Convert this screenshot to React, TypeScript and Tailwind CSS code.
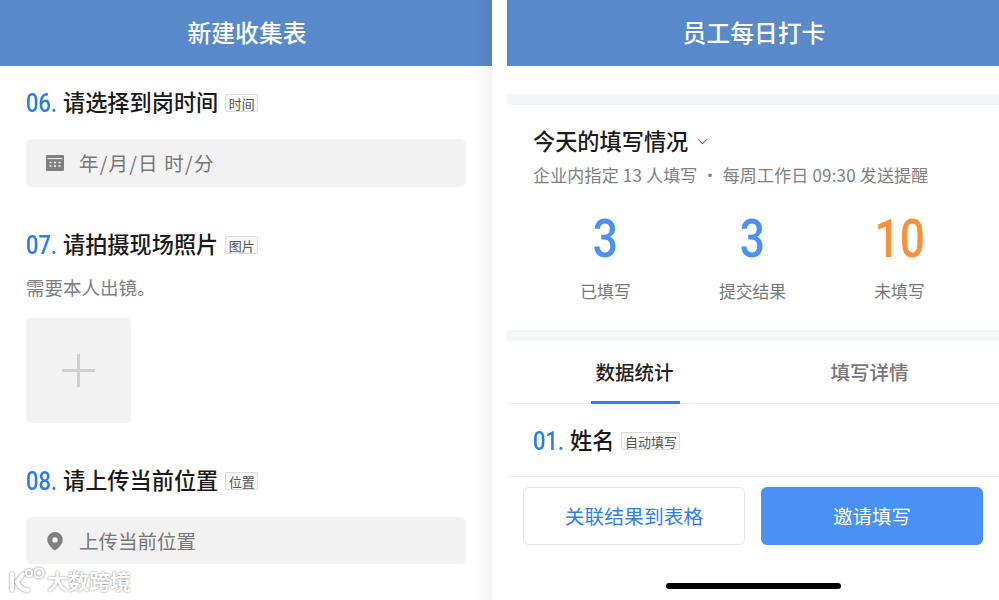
import { ChevronDown } from "lucide-react";

const cjk = { fontFamily: '"Noto Sans CJK SC", sans-serif' };

function Tag({ text }: { text: string }) {
  return (
    <span className="ml-[7px] flex h-[18px] items-center rounded-[2px] border border-[#dcdcdc] bg-[#f8f8f8] px-[2.5px] text-[13px] leading-none font-normal text-[#555]">
      {text}
    </span>
  );
}

function Question({ no, title, tag }: { no: string; title: string; tag: string }) {
  return (
    <div className="flex h-[30px] items-center">
      <span className="w-[37px] origin-left scale-x-[0.88] text-[25px] leading-none font-medium text-[#2a7de8] font-['Roboto']">{no}</span>
      <span className="-mt-[3px] text-[22.2px] leading-none font-medium text-[#1a1a1a]">{title}</span>
      <Tag text={tag} />
    </div>
  );
}

function Stat({ value, label, orange }: { value: string; label: string; orange?: boolean }) {
  return (
    <div className="flex flex-col items-center">
      <div className={`h-[58px] scale-x-[0.82] text-[54px] leading-[58px] font-medium font-['Roboto'] ${orange ? "text-[#f7923a]" : "text-[#4a90f5]"}`}>
        {value}
      </div>
      <div className="mt-[11px] text-[16.8px] leading-[24px] text-[#777]">{label}</div>
    </div>
  );
}

function Header({ title }: { title: string }) {
  return (
    <div className="flex h-[66px] items-center justify-center bg-[#5889ca] pb-[2px] pl-[2px] text-[23.8px] font-medium text-white">
      {title}
    </div>
  );
}

export default function App() {
  return (
    <div className="relative flex h-[600px] w-[999px] overflow-hidden bg-white" style={cjk}>
      {/* left phone */}
      <div className="relative h-full w-[492px] shrink-0">
        <Header title="新建收集表" />
        <div className="px-[26px] pt-[22px]">
          <Question no="06." title="请选择到岗时间" tag="时间" />
          <div className="mt-[21px] flex h-[48px] items-center rounded-[6px] bg-[#f2f2f2] pl-[20px] text-[19.5px] text-[#777]">
            <svg width="18" height="16" viewBox="0 0 18 16">
              <path d="M1 0h16a1 1 0 0 1 1 1v14a1 1 0 0 1-1 1H1a1 1 0 0 1-1-1V1a1 1 0 0 1 1-1Z" fill="#808080" />
              <path d="M1.5 3.6h15" stroke="#f2f2f2" strokeWidth="1" />
              <path d="M3.5 7.5h2M8 7.5h2M12.5 7.5h2M3.5 11h2M8 11h2M12.5 11h2" stroke="#f2f2f2" strokeWidth="1.6" />
            </svg>
            <span className="ml-[15px] tracking-[1.2px]">年/月/日 时/分</span>
          </div>
          <div className="mt-[43px]">
            <Question no="07." title="请拍摄现场照片" tag="图片" />
          </div>
          <div className="mt-[13px] text-[18.5px] leading-[28px] text-[#808080]">需要本人出镜。</div>
          <div className="mt-[17px] flex h-[105px] w-[105px] items-center justify-center rounded-[5px] bg-[#f2f2f2]">
            <svg width="33" height="33" viewBox="0 0 33 33">
              <path d="M16.5 0v33M0 16.5h33" stroke="#cfcfcf" strokeWidth="3" />
            </svg>
          </div>
          <div className="mt-[43px]">
            <Question no="08." title="请上传当前位置" tag="位置" />
          </div>
          <div className="mt-[21px] flex h-[47px] items-center rounded-[6px] bg-[#f2f2f2] pl-[20px] text-[19.5px] text-[#777]">
            <svg width="18" height="20" viewBox="0 0 18 20">
              <path
                fillRule="evenodd"
                d="M9 1a7.8 7.8 0 0 0-7.8 7.8C1.2 13.2 6 17.6 9 19.6c3-2 7.8-6.4 7.8-10.8A7.8 7.8 0 0 0 9 1Zm0 5.2a2.7 2.7 0 1 1 0 5.4 2.7 2.7 0 0 1 0-5.4Z"
                fill="#808080"
              />
            </svg>
            <span className="ml-[15px]">上传当前位置</span>
          </div>
        </div>
        {/* fold shadow along the right edge */}
        <div className="absolute inset-y-0 right-0 w-[18px] bg-gradient-to-r from-transparent to-black/5" />
        {/* watermark */}
        <div className="absolute left-[9px] top-[567px] flex items-center">
          <svg width="36" height="27" viewBox="0 0 36 27" fill="none" stroke="#fff" style={{ filter: "drop-shadow(0 0 1px #777)" }}>
            <path d="M3 7v16" strokeWidth="4" strokeLinecap="round" />
            <path d="M14 7 8 15c2 5 6 8 11 8" strokeWidth="4" strokeLinecap="round" />
            <circle cx="20" cy="6" r="3" strokeWidth="2" />
            <circle cx="30" cy="6" r="4.5" strokeWidth="2" />
          </svg>
          <span className="ml-[2px] text-[21px] leading-none font-bold text-white [text-shadow:0_0_2px_#777]">大数跨境</span>
        </div>
      </div>

      {/* right phone */}
      <div className="ml-[15px] flex h-full w-[492px] shrink-0 flex-col">
        <Header title="员工每日打卡" />
        <div className="mt-[28px] h-[11px] bg-[#f4f5f6]" />
        <div className="pl-[26px] pt-[20px]">
          <div className="flex h-[32px] items-center text-[22.2px] font-medium text-[#1a1a1a]">
            今天的填写情况
            <ChevronDown className="ml-[6px] h-[17px] w-[17px] text-[#777]" strokeWidth={1.5} />
          </div>
          <div className="mt-[6px] text-[17px] leading-[24px] tracking-[0.17px] text-[#808080]">
            企业内指定 13 人填写 · 每周工作日 09:30 发送提醒
          </div>
        </div>
        <div className="grid grid-cols-3 pl-[25px] pr-[26px] pt-[23px]">
          <Stat value="3" label="已填写" />
          <Stat value="3" label="提交结果" />
          <Stat value="10" label="未填写" orange />
        </div>
        <div className="mt-[27px] h-[11px] bg-[#f4f5f6]" />
        <div className="grid h-[63px] grid-cols-2 border-b border-[#eeeeee] pl-[10px] pr-[12px]">
          <div className="relative flex items-center justify-center text-[19.5px] font-medium text-[#222]">
            数据统计
            <div className="absolute bottom-[-1px] left-[74px] h-[3px] w-[89px] bg-[#2f7fe8]" />
          </div>
          <div className="flex items-center justify-center text-[19.5px] font-medium text-[#777]">填写详情</div>
        </div>
        <div className="h-[73px] border-b border-[#f0f0f0] pl-[26px] pt-[22px]">
          <Question no="01." title="姓名" tag="自动填写" />
        </div>
        <div className="flex gap-[16px] pl-[16px] pr-[16px] pt-[10px]">
          <div className="flex h-[58px] w-[222px] items-center justify-center rounded-[6px] border border-[#e4e4e4] text-[19.8px] text-[#2f7fe8]">
            关联结果到表格
          </div>
          <div className="flex h-[58px] w-[222px] items-center justify-center rounded-[6px] bg-[#4a90f5] text-[19.5px] text-white">
            邀请填写
          </div>
        </div>
        <div className="mt-[38px] h-[6px] w-[175px] self-center rounded-full bg-black" />
      </div>
    </div>
  );
}
